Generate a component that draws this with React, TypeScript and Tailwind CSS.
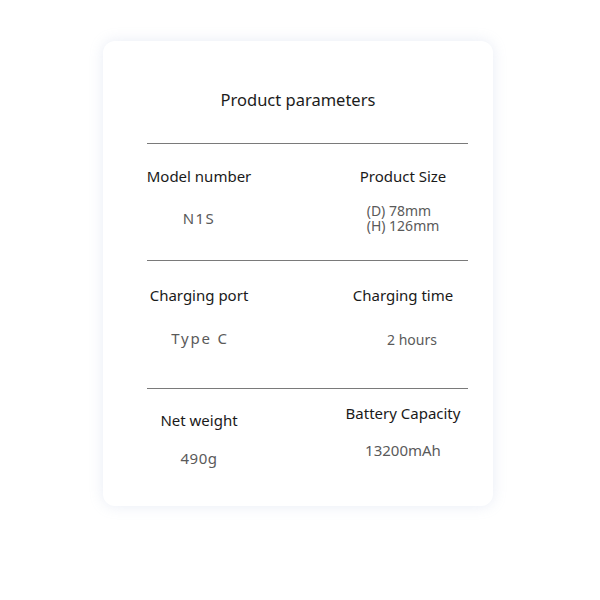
import React from "react";

const font = { fontFamily: '"Noto Sans", "Open Sans", sans-serif' };

function Divider() {
  return <div className="ml-[44px] h-px w-[321px] bg-[#7a7a7a]" />;
}

export default function App() {
  return (
    <main className="h-[600px] w-[600px] bg-white pl-[103px] pt-[41px]" style={font}>
      <div className="flex h-[465px] w-[390px] flex-col rounded-[12px] bg-white shadow-[0_0_14px_rgba(150,170,210,0.22)]">
        <h1 className="pt-[47px] text-center text-[16.5px] leading-[24px] text-[#1c1c1c]">
          Product parameters
        </h1>
        <div className="mt-[31px]">
          <Divider />
        </div>

        {/* row 1 */}
        <div className="flex h-[116px] pl-[44px]">
          <div className="flex w-[104px] flex-col items-center pt-[22px]">
            <span className="whitespace-nowrap text-[15px] leading-[20px] text-[#1a1a1a]">Model number</span>
            <span className="mt-[22px] text-[15px] leading-[20px] tracking-[1.5px] text-[#5a5a5a]">N1S</span>
          </div>
          <div className="ml-[92px] flex w-[120px] flex-col items-center pt-[22px]">
            <span className="whitespace-nowrap text-[15px] leading-[20px] text-[#1a1a1a]">Product Size</span>
            <div className="mt-[17px] text-[14px] leading-[15px] text-[#5a5a5a]">
              <div>(D) 78mm</div>
              <div>(H) 126mm</div>
            </div>
          </div>
        </div>
        <Divider />

        {/* row 2 */}
        <div className="flex h-[127px] pl-[44px]">
          <div className="flex w-[104px] flex-col items-center pt-[24px]">
            <span className="whitespace-nowrap text-[15px] leading-[20px] text-[#1a1a1a]">Charging port</span>
            <span className="mt-[23px] pl-[2px] text-[15px] leading-[20px] tracking-[1.8px] text-[#5a5a5a]">Type C</span>
          </div>
          <div className="ml-[92px] flex w-[120px] flex-col items-center pt-[24px]">
            <span className="whitespace-nowrap text-[15px] leading-[20px] text-[#1a1a1a]">Charging time</span>
            <span className="ml-[18px] mt-[25px] text-[14px] leading-[20px] text-[#5a5a5a]">2 hours</span>
          </div>
        </div>
        <Divider />

        {/* row 3 */}
        <div className="flex pl-[44px]">
          <div className="flex w-[104px] flex-col items-center pt-[21px]">
            <span className="whitespace-nowrap text-[15px] leading-[20px] text-[#1a1a1a]">Net weight</span>
            <span className="mt-[18px] text-[15px] leading-[20px] tracking-[0.5px] text-[#5a5a5a]">490g</span>
          </div>
          <div className="ml-[92px] flex w-[120px] flex-col items-center pt-[14px]">
            <span className="whitespace-nowrap text-[15px] leading-[20px] text-[#1a1a1a]">Battery Capacity</span>
            <span className="mt-[17px] text-[15px] leading-[20px] text-[#5a5a5a]">13200mAh</span>
          </div>
        </div>
      </div>
    </main>
  );
}
